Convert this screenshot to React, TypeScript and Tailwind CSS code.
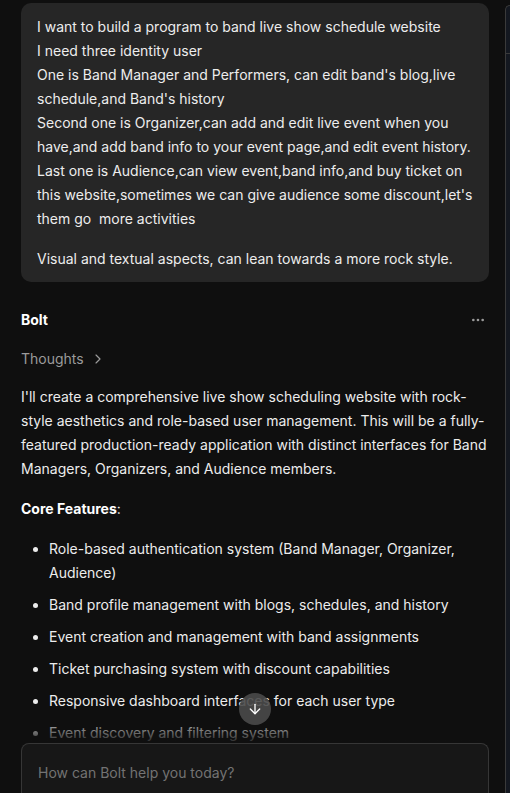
import { ArrowDown, ChevronRight, MoreHorizontal } from "lucide-react";

const features = [
  "Role-based authentication system (Band Manager, Organizer, Audience)",
  "Band profile management with blogs, schedules, and history",
  "Event creation and management with band assignments",
  "Ticket purchasing system with discount capabilities",
  "Responsive dashboard interfaces for each user type",
  "Event discovery and filtering system",
];

export default function App() {
  return (
    <div
      className="flex h-[793px] w-[510px] overflow-hidden bg-[#0f0f0f] text-[#ececec]"
      style={{ fontFamily: "Inter, 'Noto Sans', sans-serif" }}
    >
      {/* Chat column */}
      <div className="flex min-w-0 flex-1 flex-col">
        <div className="relative flex-1 overflow-hidden pl-[21px] pr-4 pt-[3px]">
          {/* User prompt */}
          <div className="rounded-[10px] bg-[#262626] px-4 pb-[11px] pt-3 text-[14px] leading-6 text-[#ededed]">
            <p>
              I want to build a program to band live show schedule website
              <br />
              I need three identity user
              <br />
              One is Band Manager and Performers, can edit band's blog,live
              schedule,and Band's history
              <br />
              Second one is Organizer,can add and edit live event when you
              have,and add band info to your event page,and edit event history.
              <br />
              Last one is Audience,can view event,band info,and buy ticket on
              this website,sometimes we can give audience some discount,let's
              them go&nbsp; more activities
            </p>
            <p className="mt-4">
              Visual and textual aspects, can lean towards a more rock style.
            </p>
          </div>

          {/* Assistant header */}
          <div className="mt-7 flex items-center justify-between">
            <span className="text-[14px] font-bold leading-5 text-white">
              Bolt
            </span>
            <MoreHorizontal className="mr-[3px] h-4 w-4 text-[#9a9a9a]" />
          </div>

          <div className="mt-[17px] flex items-center gap-[6px] text-[14px] leading-6 text-[#9b9b9b]">
            <span>Thoughts</span>
            <ChevronRight className="h-4 w-4" strokeWidth={1.75} />
          </div>

          <div className="mt-[14px] text-[14px] leading-6 text-[#ececec]">
            <p>
              I'll create a comprehensive live show scheduling website with
              rock-style aesthetics and role-based user management. This will
              be a fully-featured production-ready application with distinct
              interfaces for Band Managers, Organizers, and Audience members.
            </p>
            <p className="mt-4">
              <strong className="font-bold text-white">Core Features</strong>:
            </p>
            <ul className="mt-4 list-disc space-y-2 pl-7">
              {features.map((f) => (
                <li key={f}>{f}</li>
              ))}
            </ul>
          </div>

          {/* fade above input */}
          <div className="absolute inset-x-0 bottom-0 h-[22px] bg-gradient-to-b from-[#0f0f0f]/20 to-[#0f0f0f]/90" />

          {/* scroll to bottom */}
          <div className="absolute bottom-[18px] left-[239px] flex h-8 w-8 items-center justify-center rounded-full bg-[#4a4a4a]/90">
            <ArrowDown className="h-4 w-4 text-white" strokeWidth={2} />
          </div>
        </div>

        {/* Prompt input */}
        <div className="ml-[21px] mr-4 h-[50px] rounded-t-[8px] border border-b-0 border-[#363636] bg-[#171717] px-4 pt-[17px] text-[14px] leading-6 text-[#737373]">
          How can Bolt help you today?
        </div>
      </div>

      {/* Neighbouring panel edge */}
      <div className="mt-[5px] flex w-[5px] flex-col rounded-tl-[8px] border-l border-t border-[#3a3a3a] bg-[#141820]">
        <div className="mt-[47px] h-px bg-[#3a3a3a]" />
      </div>
    </div>
  );
}
